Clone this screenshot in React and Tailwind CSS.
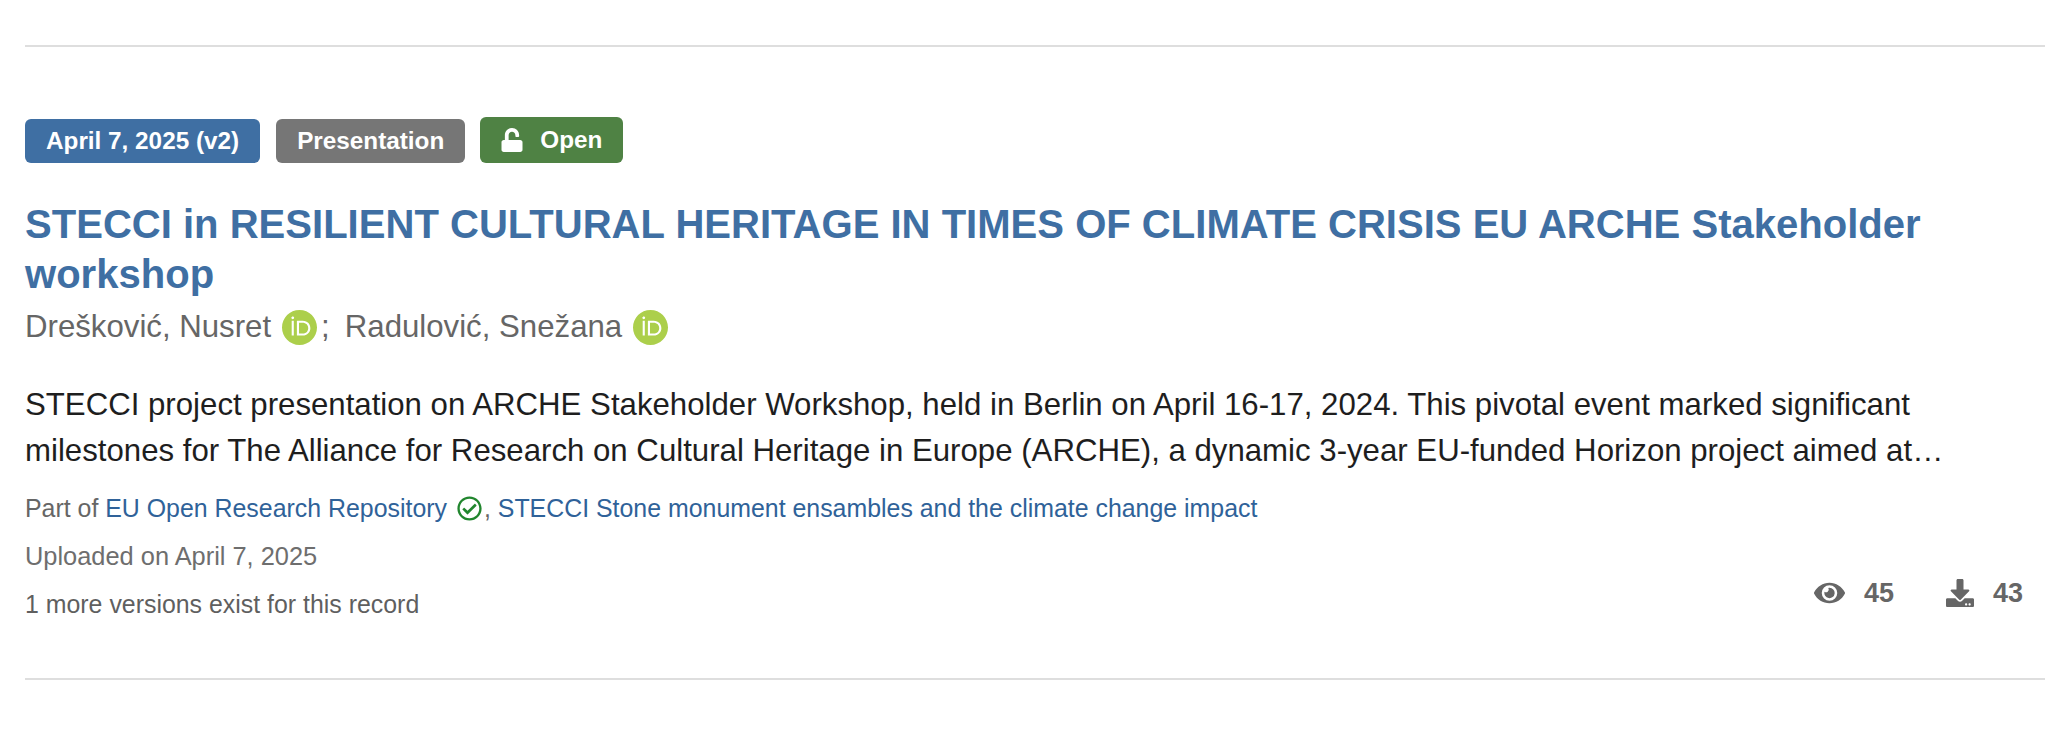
import { FaUnlock, FaEye, FaDownload, FaRegCheckCircle } from 'react-icons/fa';
import { SiOrcid } from 'react-icons/si';

function Label({ color, children }) {
  return (
    <span className={`inline-flex items-center h-[44px] px-[21px] rounded-[6px] text-white font-bold text-[24.3px] ${color}`}>
      {children}
    </span>
  );
}

function Orcid() {
  return <SiOrcid className="inline-block w-[35px] h-[35px] text-[#accf4b] shrink-0" />;
}

export default function App() {
  return (
    <div className="w-[2060px] h-[750px] bg-white overflow-hidden pl-[25px] pr-[15px] pt-[45px] font-['Liberation_Sans',Arial,sans-serif]">
      <div className="border-t-2 border-[#dedede]" />

      <div className="mt-[70px] flex items-end">
        <Label color="bg-[#3f6fa3]">April 7, 2025 (v2)</Label>
        <span className="ml-[16px]"><Label color="bg-[#767676]">Presentation</Label></span>
        <span className="ml-[15px] inline-flex items-center h-[46px] pl-[21px] pr-[21px] rounded-[6px] text-white font-bold text-[24.3px] bg-[#4f8244]">
          <FaUnlock className="w-[22px] h-[24px] mr-[17px]" />
          Open
        </span>
      </div>

      <h2 className="mt-[36px] text-[#3f6fa3] font-bold text-[40.05px] leading-[50px] w-[1960px]">
        STECCI in RESILIENT CULTURAL HERITAGE IN TIMES OF CLIMATE CRISIS EU ARCHE Stakeholder workshop
      </h2>

      <div className="flex items-center text-[#666666] text-[31.2px] h-[46px] mt-[5px]">
        <span>Drešković, Nusret</span>
        <span className="ml-[11px] flex"><Orcid /></span>
        <span className="ml-[4px]">;</span>
        <span className="ml-[15px]">Radulović, Snežana</span>
        <span className="ml-[11px] flex"><Orcid /></span>
      </div>

      <p className="mt-[32px] text-[#1e1e1e] text-[31.2px] leading-[46px]">
        <span className="block whitespace-nowrap">STECCI project presentation on ARCHE Stakeholder Workshop, held in Berlin on April 16-17, 2024. This pivotal event marked significant</span>
        <span className="block whitespace-nowrap">milestones for The Alliance for Research on Cultural Heritage in Europe (ARCHE), a dynamic 3-year EU-funded Horizon project aimed at…</span>
      </p>

      <div className="mt-[16px] flex items-center text-[24.9px] leading-[36px] text-[#666666]">
        <span>Part of&nbsp;</span>
        <span className="text-[#2f6299]">EU Open Research Repository</span>
        <FaRegCheckCircle className="ml-[10px] w-[25px] h-[25px] text-[#21862e]" />
        <span className="ml-[2px]">,&nbsp;</span>
        <span className="text-[#2f6299]">STECCI Stone monument ensambles and the climate change impact</span>
      </div>

      <div className="flex justify-between items-end">
        <div>
          <p className="mt-[12px] text-[#6e6e6e] text-[25.4px] leading-[36px]">Uploaded on April 7, 2025</p>
          <p className="mt-[12px] text-[#5f5f5f] text-[24.9px] leading-[36px]">1 more versions exist for this record</p>
        </div>
        <div className="flex items-center text-[#666666] font-bold text-[27px] mb-[9px] mr-[22px]">
          <FaEye className="w-[31px] h-[28px]" />
          <span className="ml-[19px]">45</span>
          <FaDownload className="ml-[52px] w-[28px] h-[28px]" />
          <span className="ml-[19px]">43</span>
        </div>
      </div>

      <div className="mt-[56px] border-t-2 border-[#dedede]" />
    </div>
  );
}
